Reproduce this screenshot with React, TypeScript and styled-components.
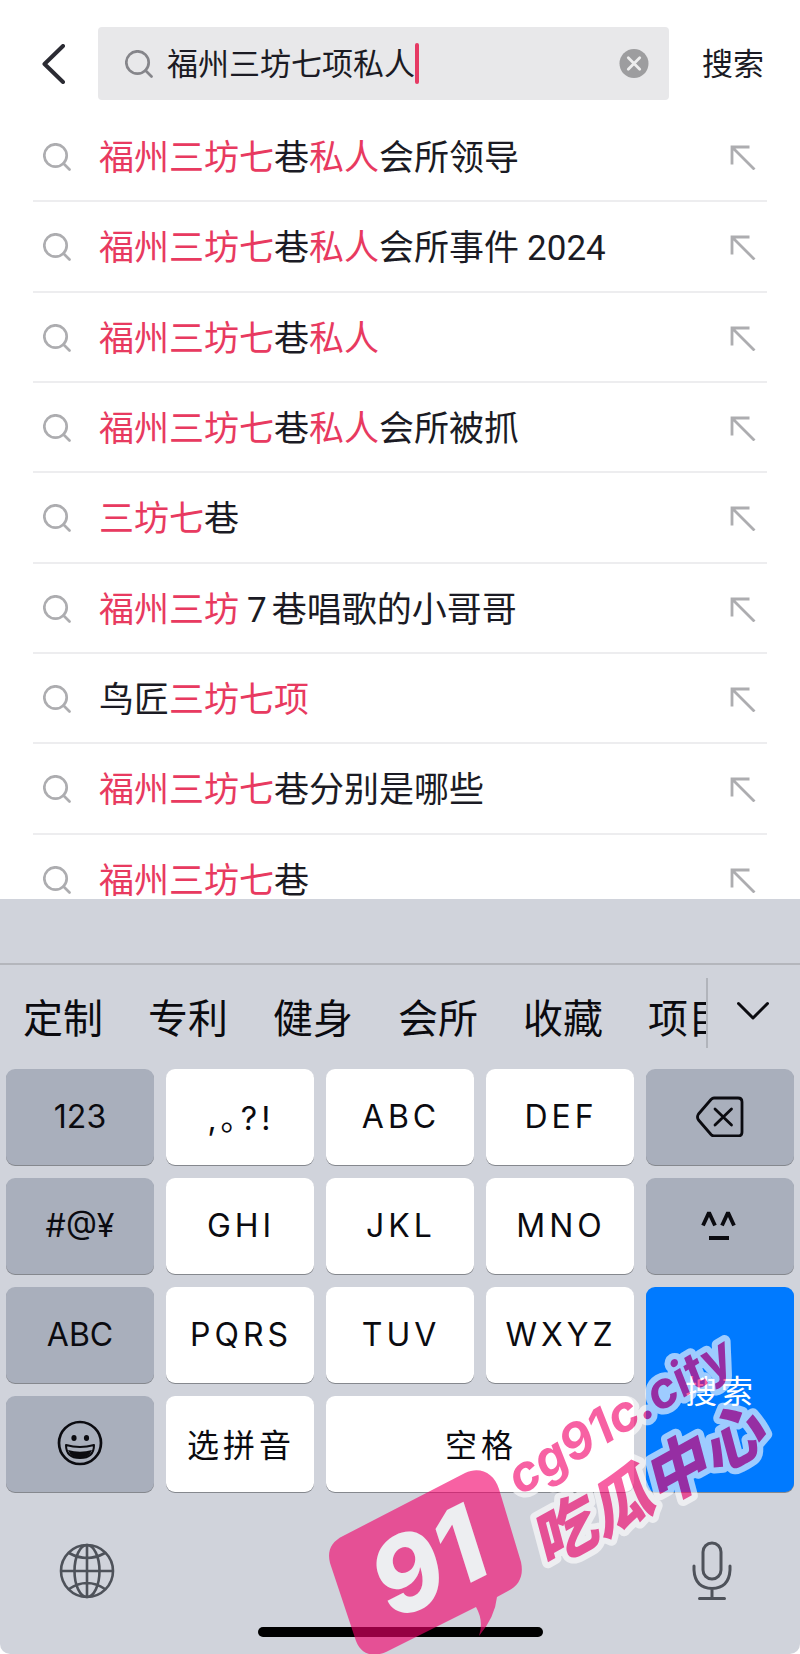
import React, { useState } from "react";
import styled, { createGlobalStyle, css } from "styled-components";

const GlobalStyle = createGlobalStyle`
  *, *::before, *::after { box-sizing: border-box; }
  html, body { margin: 0; background: #fff; }
  body {
    font-family: Roboto, "Noto Sans CJK SC", sans-serif;
    color: #1b1b24;
  }
  button, input { font: inherit; color: inherit; border: 0; background: none; padding: 0; margin: 0; }
  button { cursor: pointer; }
  svg { display: block; }
`;

const Screen = styled.div`
  display: flex;
  flex-direction: column;
  height: 100vh;
  overflow: hidden;
`;

const Header = styled.form`
  display: flex;
  align-items: center;
  flex: none;
  padding: 27px 36px 12px 40px;
`;

const BackButton = styled.button`
  width: 58px;
  flex: none;
`;

const SearchBox = styled.div`
  display: flex;
  align-items: center;
  flex: 1;
  min-width: 0;
  height: 73px;
  padding: 0 20px 0 27px;
  border-radius: 4px;
  background: #e8e8ea;
`;

const SearchInput = styled.input`
  field-sizing: content;
  min-width: 31px;
  margin-left: 14px;
  padding-top: 2px;
  font-size: 31px;
  line-height: 44px;
  outline: none;
`;

const Caret = styled.span`
  flex: none;
  width: 4px;
  height: 41px;
  border-radius: 2px;
  background: #e63a64;
`;

const ClearButton = styled.button`
  margin-left: auto;
`;

const SubmitButton = styled.button`
  flex: none;
  margin-left: 33px;
  padding-top: 2px;
  font-size: 31px;
  line-height: 44px;
`;

const Suggestions = styled.main`
  flex: 1 1 0;
  min-height: 0;
  overflow: hidden;
`;

const SuggestionList = styled.ul`
  display: grid;
  grid-auto-rows: 1fr;
  min-height: 813px;
  margin: 0;
  padding: 0 33px;
  list-style: none;
`;

const SuggestionRow = styled.li`
  display: flex;
  border-bottom: 2px solid #ededef;
`;

const SuggestionLink = styled.a`
  display: flex;
  align-items: center;
  flex: 1;
  padding: 2px 11px 0 10px;
  color: inherit;
  text-decoration: none;
  font-size: 35px;
  line-height: 48px;
`;

const SuggestionText = styled.span`
  flex: 1;
  margin-left: 28px;
  padding-top: 4px;
`;

const Match = styled.em`
  font-style: normal;
  color: #e83a60;
`;

const Digits = styled.span`
  margin: 0 5px 0 8px;
`;

const Keyboard = styled.section`
  position: relative;
  flex: none;
  border-radius: 0 0 10px 10px;
  background: #d0d3db;
  color: #0b0b10;
  font-family: Inter, "Noto Sans CJK SC", sans-serif;
`;

const Accessory = styled.div`
  height: 66px;
  border-bottom: 2px solid #b4b6bc;
`;

const CandidateBar = styled.div`
  display: flex;
  align-items: stretch;
  height: 104px;
  padding: 13px 0 21px;
`;

const Candidates = styled.div`
  display: flex;
  gap: 45px;
  flex: 1;
  min-width: 0;
  overflow: hidden;
  padding: 9px 0 0 23px;
  border-right: 2px solid #b1b4bb;
`;

const Candidate = styled.button`
  flex: none;
  height: 64px;
  font-size: 40px;
  line-height: 64px;
  white-space: nowrap;
`;

const ExpandButton = styled.button`
  display: flex;
  align-items: center;
  justify-content: center;
  flex: none;
  width: 92px;
  padding-bottom: 5px;
`;

const Keys = styled.div`
  display: grid;
  grid-template-columns: repeat(5, 1fr);
  grid-auto-rows: 96px;
  gap: 13px 12px;
  padding: 0 6px;
`;

type Tone = "light" | "dark" | "action";

const spaced = css`
  letter-spacing: 4px;
  text-indent: 2px;
`;

const tones = {
  light: css`background: #fff; ${spaced}`,
  dark: css`background: #a9afbc;`,
  action: css`background: #007aff; color: #fff; ${spaced}`,
};

const Key = styled.button<{ $tone: Tone; $cols?: number; $rows?: number }>`
  display: flex;
  align-items: center;
  justify-content: center;
  grid-column: span ${(p) => p.$cols ?? 1};
  grid-row: span ${(p) => p.$rows ?? 1};
  padding-bottom: 2px;
  border-radius: 9px;
  box-shadow: 0 1px 0 #85888e;
  font-size: 32px;
  ${(p) => tones[p.$tone]}
`;

const BottomBar = styled.div`
  display: flex;
  align-items: center;
  justify-content: space-between;
  height: 135px;
  padding: 23px 67px 0 59px;
  color: #4e525a;
`;

const HomeIndicator = styled.div`
  width: 285px;
  height: 10px;
  margin: 0 auto 17px;
  border-radius: 5px;
  background: #000;
`;

const Watermark = styled.svg`
  position: absolute;
  right: 0;
  bottom: 0;
  pointer-events: none;
`;

const SearchIcon = ({ color }: { color: string }) => (
  <svg width="28" height="28" viewBox="0 0 28 28" fill="none" stroke={color} strokeWidth="2.7" strokeLinecap="round">
    <circle cx="12.5" cy="12.5" r="11.2" />
    <path d="M20.5 20.5 26.5 26.5" />
  </svg>
);

const FillArrowIcon = () => (
  <svg width="26" height="26" viewBox="0 0 26 26" fill="none" stroke="#adadb0" strokeWidth="2.8">
    <path d="M19.5 3H2V20.5M2 3 24.5 25.5" />
  </svg>
);

const BackIcon = () => (
  <svg width="26" height="40" viewBox="0 0 26 40" fill="none" stroke="#2b2b33" strokeWidth="4" strokeLinecap="round" strokeLinejoin="round">
    <path d="M23 2 4.5 20 23 38" />
  </svg>
);

const ClearIcon = () => (
  <svg width="30" height="30" viewBox="0 0 30 30">
    <circle cx="15" cy="14.5" r="14.5" fill="#9d9d9f" />
    <path d="M9.3 8.8 20.7 20.2M20.7 8.8 9.3 20.2" stroke="#eee" strokeWidth="2.8" strokeLinecap="round" />
  </svg>
);

const ChevronDownIcon = () => (
  <svg width="34" height="20" viewBox="0 0 34 20" fill="none" stroke="#0b0b10" strokeWidth="3" strokeLinecap="round" strokeLinejoin="round">
    <path d="M1.5 2.5 16 17 30.5 2.5" />
  </svg>
);

const DeleteIcon = () => (
  <svg width="48" height="42" viewBox="0 0 48 42" fill="none" stroke="#0b0b10" strokeWidth="2.8" strokeLinecap="round" strokeLinejoin="round">
    <path d="M18 3H42Q46 3 46 7V37Q46 41 42 41H18Q16.5 41 15 39.5L2.5 25Q.5 22 2.5 19L15 4.5Q16.5 3 18 3Z" />
    <path d="M19 14 35.5 30M35.5 14 19 30" />
  </svg>
);

const FaceIcon = () => (
  <svg width="38" height="34" viewBox="0 0 38 34" fill="none" stroke="#0b0b10" strokeWidth="3.8" strokeLinejoin="bevel">
    <path d="M2 17.5 8 4.5 14 17.5M21 17.5 27 4.5 33 17.5M8 30H28" />
  </svg>
);

const EmojiIcon = () => (
  <svg width="46" height="46" viewBox="0 0 46 46" fill="none" stroke="#0b0b10" strokeWidth="2.7">
    <circle cx="23" cy="23" r="21" />
    <ellipse cx="17" cy="18" rx="2.6" ry="3" fill="#0b0b10" stroke="none" />
    <ellipse cx="29.5" cy="18" rx="2.6" ry="3" fill="#0b0b10" stroke="none" />
    <path d="M9 25Q23 29 37 25Q37 38 23 38Q9 38 9 25Z" strokeWidth="2" strokeLinejoin="round" />
    <path d="M11 30Q23 33.5 35 30Q32 38 23 38Q14 38 11 30Z" fill="#0b0b10" stroke="none" />
  </svg>
);

const GlobeIcon = () => (
  <svg width="56" height="56" viewBox="0 0 56 56" fill="none" stroke="currentColor" strokeWidth="2.6">
    <circle cx="28" cy="28" r="26" />
    <ellipse cx="28" cy="28" rx="12.5" ry="26" />
    <path d="M28 2V54M2 28H54M10 10Q28 20 46 10M10 46Q28 34 46 46" />
  </svg>
);

const MicIcon = () => (
  <svg width="42" height="60" viewBox="0 0 42 60" fill="none" stroke="currentColor" strokeWidth="3" strokeLinecap="round">
    <rect x="12" y="2" width="18" height="36" rx="9" />
    <path d="M3 25V29Q4 47 21 47.5Q38 47 39 29V25M21 48V57M8.5 57.5H33.5" />
  </svg>
);

type Part = { text: string; kind?: "match" | "digits" };

const m = (text: string): Part => ({ text, kind: "match" });
const d = (text: string): Part => ({ text, kind: "digits" });
const t = (text: string): Part => ({ text });

const suggestions: Part[][] = [
  [m("福州三坊七"), t("巷"), m("私人"), t("会所领导")],
  [m("福州三坊七"), t("巷"), m("私人"), t("会所事件"), d("2024")],
  [m("福州三坊七"), t("巷"), m("私人")],
  [m("福州三坊七"), t("巷"), m("私人"), t("会所被抓")],
  [m("三坊七"), t("巷")],
  [m("福州三坊"), d("7"), t("巷唱歌的小哥哥")],
  [t("鸟匠"), m("三坊七项")],
  [m("福州三坊七"), t("巷分别是哪些")],
  [m("福州三坊七"), t("巷")],
];

const candidates = ["定制", "专利", "健身", "会所", "收藏", "项目"];

type KeySpec = { label: string; tone: Tone; icon?: React.ReactNode; cols?: number; rows?: number };

const keys: KeySpec[] = [
  { label: "123", tone: "dark" },
  { label: ",｡?!", tone: "light" },
  { label: "ABC", tone: "light" },
  { label: "DEF", tone: "light" },
  { label: "删除", tone: "dark", icon: <DeleteIcon /> },
  { label: "#@¥", tone: "dark" },
  { label: "GHI", tone: "light" },
  { label: "JKL", tone: "light" },
  { label: "MNO", tone: "light" },
  { label: "颜文字", tone: "dark", icon: <FaceIcon /> },
  { label: "ABC", tone: "dark" },
  { label: "PQRS", tone: "light" },
  { label: "TUV", tone: "light" },
  { label: "WXYZ", tone: "light" },
  { label: "搜索", tone: "action", rows: 2 },
  { label: "表情", tone: "dark", icon: <EmojiIcon /> },
  { label: "选拼音", tone: "light" },
  { label: "空格", tone: "light", cols: 2 },
];

function SuggestionPart({ part }: { part: Part }) {
  if (part.kind === "match") return <Match>{part.text}</Match>;
  if (part.kind === "digits") return <Digits>{part.text}</Digits>;
  return <>{part.text}</>;
}

export default function App() {
  const [query, setQuery] = useState("福州三坊七项私人");

  return (
    <Screen>
      <GlobalStyle />
      <Header onSubmit={(e) => e.preventDefault()}>
        <BackButton type="button" aria-label="返回"><BackIcon /></BackButton>
        <SearchBox>
          <SearchIcon color="#85858a" />
          <SearchInput aria-label="搜索内容" value={query} onChange={(e) => setQuery(e.target.value)} />
          <Caret />
          <ClearButton type="button" aria-label="清除" onClick={() => setQuery("")}><ClearIcon /></ClearButton>
        </SearchBox>
        <SubmitButton type="submit">搜索</SubmitButton>
      </Header>

      <Suggestions>
        <SuggestionList>
          {suggestions.map((parts, i) => (
            <SuggestionRow key={i}>
              <SuggestionLink href="#">
                <SearchIcon color="#adadb0" />
                <SuggestionText>
                  {parts.map((part, j) => <SuggestionPart key={j} part={part} />)}
                </SuggestionText>
                <FillArrowIcon />
              </SuggestionLink>
            </SuggestionRow>
          ))}
        </SuggestionList>
      </Suggestions>

      <Keyboard aria-label="键盘">
        <Accessory />
        <CandidateBar>
          <Candidates>
            {candidates.map((word) => <Candidate key={word} type="button">{word}</Candidate>)}
          </Candidates>
          <ExpandButton type="button" aria-label="展开"><ChevronDownIcon /></ExpandButton>
        </CandidateBar>
        <Keys>
          {keys.map((k, i) => (
            <Key key={i} type="button" $tone={k.tone} $cols={k.cols} $rows={k.rows} aria-label={k.label}>
              {k.icon ?? k.label}
            </Key>
          ))}
        </Keys>
        <BottomBar>
          <button type="button" aria-label="切换键盘"><GlobeIcon /></button>
          <button type="button" aria-label="语音输入"><MicIcon /></button>
        </BottomBar>
        <HomeIndicator />
        <Watermark width="490" height="334" viewBox="0 0 490 334">
          <g opacity="0.62" fill="#f2006b" fontStyle="italic">
            <path d="M33 216 155 153C170 146 184 153 189 169L211 242C214 256 209 266 198 271L187 277Q185 297 169 316Q174 301 166 287L76 332C62 338 51 334 46 321L20 243C17 231 21 222 33 216Z" />
            <text transform="translate(84 302) rotate(-27)" fill="#fff" fontFamily="Inter, sans-serif" fontWeight="800" fontSize="104">91</text>
            <g stroke="#fff" strokeWidth="12" strokeLinejoin="round" paintOrder="stroke">
              <text transform="translate(210 176) rotate(-31)" fontFamily="Inter, sans-serif" fontWeight="700" fontSize="50">cg91c.city</text>
              <text transform="translate(236 249) rotate(-29)" fontFamily="Noto Sans CJK SC, sans-serif" fontWeight="900" fontSize="64">吃瓜中心</text>
            </g>
          </g>
        </Watermark>
      </Keyboard>
    </Screen>
  );
}
